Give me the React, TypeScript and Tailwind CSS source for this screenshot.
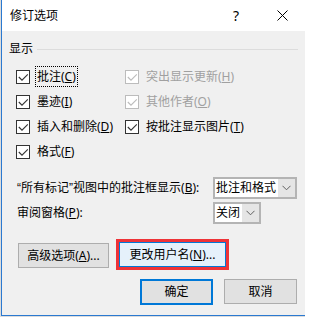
import type { ReactNode } from "react";

interface CheckItemProps {
  label: ReactNode;
  disabled?: boolean;
  focused?: boolean;
}

function Key({ children }: { children: ReactNode }) {
  return <span className="underline underline-offset-[1px]">{children}</span>;
}

function CheckItem({ label, disabled, focused }: CheckItemProps) {
  const stroke = disabled ? "#bcbcbc" : "#333333";
  return (
    <div className="flex h-[25px] items-center">
      <span
        className={`flex h-[14px] w-[14px] items-center justify-center border bg-white ${
          disabled ? "border-[#bcbcbc]" : "border-[#333333]"
        }`}
      >
        <svg width="12" height="12" viewBox="0 0 12 12">
          <path d="M1.8 6 L5 9.2 L10.8 3.4" fill="none" stroke={stroke} strokeWidth="1.1" />
        </svg>
      </span>
      <span
        className={`ml-[5px] flex h-[21px] items-center border px-[1px] ${
          focused ? "border-dotted border-black" : "border-transparent"
        } ${disabled ? "text-[#a0a0a0]" : "text-black"}`}
      >
        {label}
      </span>
    </div>
  );
}

function Chevron() {
  return (
    <svg width="9" height="6" viewBox="0 0 9 6">
      <path d="M0.5 0.8 L4.5 4.8 L8.5 0.8" fill="none" stroke="#606060" strokeWidth="1" />
    </svg>
  );
}

export default function App() {
  return (
    <div className="h-[317px] w-[305px] overflow-hidden bg-[#dcdcdc] font-['Noto_Sans','Noto_Sans_CJK_SC',sans-serif] text-[12px] leading-[16px] text-black">
      <div className="ml-[1px] flex h-[316px] w-[304px] flex-col border-b border-l border-[#2b79d0]">
        {/* title bar */}
        <div className="flex h-[31px] items-center bg-white">
          <span className="flex-1 pl-[8px] text-[12px]">修订选项</span>
          <span className="flex h-full w-[46px] items-center justify-center text-[14px]">?</span>
          <span className="flex h-full w-[46px] items-center justify-center">
            <svg width="11" height="11" viewBox="0 0 11 11">
              <path d="M0.5 0.5 L10.5 10.5 M10.5 0.5 L0.5 10.5" stroke="#000" strokeWidth="1" />
            </svg>
          </span>
        </div>

        {/* body */}
        <div className="flex flex-1 flex-col bg-[#f0f0f0] pt-[10px]">
          <div className="flex h-[16px] items-center pl-[7px] pr-[7px]">
            <span>显示</span>
            <span className="ml-[4px] h-px flex-1 bg-[#dcdcdc]" />
          </div>

          <div className="mt-[7px] grid grid-cols-[109px_1fr] pl-[14px]">
            <CheckItem
              focused
              label={
                <>
                  批注(<Key>C</Key>)
                </>
              }
            />
            <CheckItem
              disabled
              label={
                <>
                  突出显示更新(<Key>H</Key>)
                </>
              }
            />
            <CheckItem
              label={
                <>
                  墨迹(<Key>I</Key>)
                </>
              }
            />
            <CheckItem
              disabled
              label={
                <>
                  其他作者(<Key>O</Key>)
                </>
              }
            />
            <CheckItem
              label={
                <>
                  插入和删除(<Key>D</Key>)
                </>
              }
            />
            <CheckItem
              label={
                <>
                  按批注显示图片(<Key>T</Key>)
                </>
              }
            />
            <CheckItem
              label={
                <>
                  格式(<Key>F</Key>)
                </>
              }
            />
          </div>

          <div className="mt-[13px] flex h-[22px] items-center pl-[15px] pr-[8px]">
            <span className="flex-1">
              <span className="font-['Liberation_Sans',sans-serif]">“</span>所有标记
              <span className="font-['Liberation_Sans',sans-serif]">”</span>视图中的批注框显示(<Key>B</Key>):
            </span>
            <div className="flex h-[22px] w-[84px] border-2 border-[#b4b4b4] bg-white">
              <span className="flex-1 pl-[1px] leading-[18px]">批注和格式</span>
              <span className="flex w-[17px] items-center justify-center bg-[#e5e5e5]">
                <Chevron />
              </span>
            </div>
          </div>

          <div className="mt-[3px] flex h-[22px] items-center pl-[15px] pr-[44px]">
            <span className="flex-1">
              审阅窗格(<Key>P</Key>):
            </span>
            <div className="flex h-[22px] w-[48px] border-2 border-[#b4b4b4] bg-white">
              <span className="flex-1 pl-[1px] leading-[18px]">关闭</span>
              <span className="flex w-[17px] items-center justify-center bg-[#e5e5e5]">
                <Chevron />
              </span>
            </div>
          </div>

          <div className="mt-[15px] flex h-[31px] items-start pl-[16px]">
            <button
              type="button"
              className="mt-[4px] flex h-[25px] w-[91px] items-center justify-center border border-[#adadad] bg-[#e1e1e1]"
            >
              高级选项(<Key>A</Key>)...
            </button>
            <div className="ml-[7px] border-[3px] border-[#ee3338]">
              <button
                type="button"
                className="flex h-[25px] w-[107px] items-center justify-center border border-[#0078d7] bg-[#e5f1fb]"
              >
                更改用户名(<Key>N</Key>)...
              </button>
            </div>
          </div>

          <div className="mt-[9px] flex justify-end pr-[8px]">
            <button
              type="button"
              className="flex h-[26px] w-[73px] items-center justify-center border-2 border-[#0078d7] bg-[#e1e1e1]"
            >
              确定
            </button>
            <button
              type="button"
              className="ml-[11px] flex h-[25px] w-[73px] items-center justify-center border border-[#adadad] bg-[#e1e1e1]"
            >
              取消
            </button>
          </div>
        </div>
      </div>
    </div>
  );
}
